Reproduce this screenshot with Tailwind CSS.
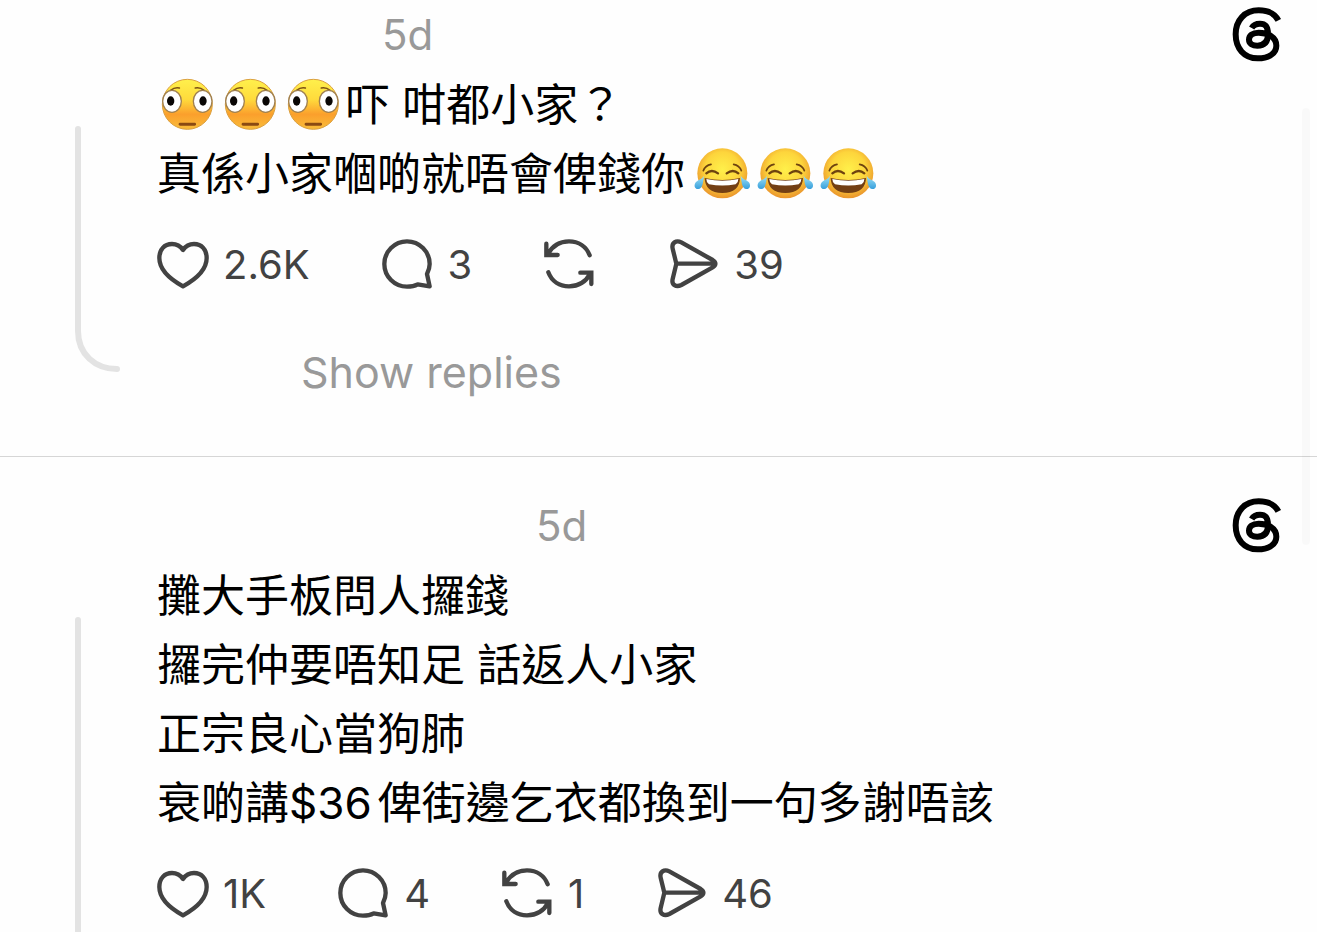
<!DOCTYPE html>
<html lang="zh-HK">
<head>
    <meta charset="UTF-8">
    <meta name="viewport" content="width=device-width, initial-scale=1">
    <title>Threads</title>
    <script src="https://cdn.jsdelivr.net/npm/@tailwindcss/browser@4"></script>
</head>
<body class="bg-[#fefefe] text-black font-['Inter','Noto_Sans_CJK_TC',sans-serif]">
    <!-- Shared icons -->
    <svg class="absolute w-0 h-0" aria-hidden="true">
        <defs>
            <linearGradient id="blush" x1="0" y1="0" x2="0" y2="1">
                <stop offset="0" stop-color="#fff04c"/>
                <stop offset=".4" stop-color="#ffdb3c"/>
                <stop offset=".7" stop-color="#fb9f2c"/>
                <stop offset="1" stop-color="#f9bd3a"/>
            </linearGradient>
            <radialGradient id="sunny" cx=".5" cy=".42" r=".58">
                <stop offset="0" stop-color="#fff04a"/>
                <stop offset=".6" stop-color="#fdd53c"/>
                <stop offset="1" stop-color="#ea942c"/>
            </radialGradient>
            <linearGradient id="tear" x1="0" y1="0" x2="0" y2="1">
                <stop offset="0" stop-color="#9fe2f6"/>
                <stop offset="1" stop-color="#379fdc"/>
            </linearGradient>
        </defs>
        <symbol id="threads" viewBox="45 20 150 168">
            <path fill="none" stroke="currentColor" stroke-width="18" d="M184 60C174 40 153 30 125 30C83 30 56 60 56 102C56 145 82 174 122 174C156 174 178 159 178 136C178 109 150 97 125 97C106 97 96 106 96 118C96 130 107 136 121 136C142 136 153 124 153 101C153 80 146 70 129 70C117 70 109 74 104 83"/>
        </symbol>
        <symbol id="heart" viewBox="21 27 156 156">
            <path fill="none" stroke="currentColor" stroke-width="13" stroke-linejoin="round" d="M99 60C91 48 80 42 66 42C43 42 28 59 28 84C28 116 52 143 99 169C146 143 170 116 170 84C170 59 155 42 132 42C118 42 107 48 99 60Z"/>
        </symbol>
        <symbol id="comment" viewBox="693 27 156 156">
            <path fill="none" stroke="currentColor" stroke-width="13" stroke-linejoin="round" d="M828 132C833 122 836 112 836 102A68 68 0 1 0 768 170C780 170 791 168 800 163L836 169Z"/>
        </symbol>
        <symbol id="repost" viewBox="69 27 156 156">
            <path fill="none" stroke="currentColor" stroke-width="13" stroke-linecap="round" d="M206 76C196 49 172 34 144 34C116 34 94 47 80 73M76 41V75H110M82 127C92 154 116 169 144 169C172 169 194 156 208 131M211 162V128H178"/>
        </symbol>
        <symbol id="send" viewBox="444 27 156 156">
            <path fill="none" stroke="currentColor" stroke-width="13" stroke-linejoin="round" d="M469 101L458 56C454 39 468 29 484 37L578 90C589 97 589 106 578 112L484 165C468 173 454 164 458 147ZM469 101H582"/>
        </symbol>
        <symbol id="flushed" viewBox="3 5 189 168">
            <circle cx="94" cy="84" r="75" fill="url(#blush)" stroke="#dba040" stroke-width="3"/>
            <path d="M44 42Q56 32 70 35M118 35Q132 32 144 42" fill="none" stroke="#7c5114" stroke-width="5" stroke-linecap="round"/>
            <ellipse cx="48" cy="75" rx="28" ry="33" fill="#fff" stroke="#a08050" stroke-width="4"/>
            <ellipse cx="140" cy="75" rx="28" ry="33" fill="#fff" stroke="#a08050" stroke-width="4"/>
            <ellipse cx="44" cy="74" rx="11" ry="14" fill="#0a0705"/>
            <ellipse cx="141" cy="74" rx="11" ry="14" fill="#0a0705"/>
            <rect x="68" y="139" width="52" height="9" rx="4" fill="#8a4a12"/>
        </symbol>
        <symbol id="joy" viewBox="0 5 189 168">
            <circle cx="94" cy="84" r="75" fill="url(#sunny)"/>
            <path d="M37 76Q43 60 60 57M128 57Q145 60 151 76" fill="none" stroke="#6e430f" stroke-width="5" stroke-linecap="round"/>
            <path d="M46 84Q62 70 81 84M107 84Q126 70 142 84" fill="none" stroke="#6e430f" stroke-width="7" stroke-linecap="round"/>
            <path d="M41 98Q94 110 147 98Q146 142 94 143Q42 142 41 98Z" fill="#733f14"/>
            <path d="M46 101Q94 112 142 101Q142 112 134 117Q94 124 54 117Q46 112 46 101Z" fill="#fff"/>
            <path d="M39 91C36 112 35 130 22 131C10 132 7 117 16 109C24 102 34 101 39 91Z" fill="url(#tear)"/>
            <path d="M149 91C152 112 153 130 166 131C178 132 181 117 172 109C164 102 154 101 149 91Z" fill="url(#tear)"/>
        </symbol>
    </svg>

    <!-- Scroll indicator -->
    <div class="absolute right-[7px] top-[108px] w-2 h-[437px] rounded-full bg-black/2"></div>

    <main class="h-screen overflow-hidden flex flex-col">
        <!-- First reply -->
        <article class="flex shrink-0 border-b border-[#d6d6d6]">
            <div class="w-[157px] shrink-0 pl-[75px] pt-[126px] pb-[84px] flex flex-col">
                <div class="w-1.5 flex-1 rounded-t-full bg-[#e3e3e3]"></div>
                <svg class="w-[46px] h-[44px]" viewBox="0 0 46 44" fill="none" stroke="#e3e3e3" stroke-width="6" stroke-linecap="round" aria-hidden="true">
                    <path d="M3 -4V3C3 26 20 41 42 41"/>
                </svg>
            </div>
            <div class="flex-1 min-w-0 pr-[35px]">
                <header class="h-[70px] flex items-center justify-between">
                    <time class="pl-[225px] text-[42px] leading-none text-[#999]">5d</time>
                    <svg class="w-[50px] h-14" role="img" aria-label="Threads"><use href="#threads"/></svg>
                </header>
                <div class="pt-px text-[44px] leading-[69px]">
                    <p class="flex items-center">
                        <svg class="w-[63px] h-14" role="img" aria-label="flushed face"><use href="#flushed"/></svg>
                        <svg class="w-[63px] h-14" role="img" aria-label="flushed face"><use href="#flushed"/></svg>
                        <svg class="w-[63px] h-14" role="img" aria-label="flushed face"><use href="#flushed"/></svg>
                        <span>吓 咁都小家？</span>
                    </p>
                    <p class="flex items-center">
                        <span class="mr-1.5">真係小家嗰啲就唔會俾錢你</span>
                        <svg class="w-[63px] h-14" role="img" aria-label="tears of joy"><use href="#joy"/></svg>
                        <svg class="w-[63px] h-14" role="img" aria-label="tears of joy"><use href="#joy"/></svg>
                        <svg class="w-[63px] h-14" role="img" aria-label="tears of joy"><use href="#joy"/></svg>
                    </p>
                </div>
                <div class="mt-[30px] flex items-center gap-[72px] text-[40px] leading-[52px] text-[#424242]">
                    <button class="flex items-center gap-3.5" aria-label="Like"><svg class="size-[52px]"><use href="#heart"/></svg>2.6K</button>
                    <button class="flex items-center gap-3.5" aria-label="Reply"><svg class="size-[52px]"><use href="#comment"/></svg>3</button>
                    <button class="flex items-center gap-3.5" aria-label="Repost"><svg class="size-[52px]"><use href="#repost"/></svg></button>
                    <button class="flex items-center gap-3.5" aria-label="Share"><svg class="size-[52px]"><use href="#send"/></svg>39</button>
                </div>
                <button class="mt-[55px] mb-[58px] ml-36 block text-[43px] leading-[52px] text-[#999]">Show replies</button>
            </div>
        </article>

        <!-- Second reply -->
        <article class="flex flex-1">
            <div class="w-[157px] shrink-0 pl-[75px] pt-40 flex flex-col">
                <div class="w-1.5 flex-1 rounded-t-full bg-[#e3e3e3]"></div>
            </div>
            <div class="flex-1 min-w-0 pr-[35px]">
                <header class="pt-[34px] h-[104px] flex items-center justify-between">
                    <time class="pl-[379px] text-[42px] leading-none text-[#999]">5d</time>
                    <svg class="w-[50px] h-14" role="img" aria-label="Threads"><use href="#threads"/></svg>
                </header>
                <div class="pt-px text-[44px] leading-[69px]">
                    <p>攤大手板問人攞錢</p>
                    <p>攞完仲要唔知足 話返人小家</p>
                    <p>正宗良心當狗肺</p>
                    <p>衰啲講<span class="mr-1.5">$36</span>俾街邊乞衣都換到一句多謝唔該</p>
                </div>
                <div class="mt-[30px] flex items-center gap-[72px] text-[40px] leading-[52px] text-[#424242]">
                    <button class="flex items-center gap-3.5" aria-label="Like"><svg class="size-[52px]"><use href="#heart"/></svg>1K</button>
                    <button class="flex items-center gap-3.5" aria-label="Reply"><svg class="size-[52px]"><use href="#comment"/></svg>4</button>
                    <button class="flex items-center gap-3.5" aria-label="Repost"><svg class="size-[52px]"><use href="#repost"/></svg>1</button>
                    <button class="flex items-center gap-3.5" aria-label="Share"><svg class="size-[52px]"><use href="#send"/></svg>46</button>
                </div>
            </div>
        </article>
    </main>
</body>
</html>
